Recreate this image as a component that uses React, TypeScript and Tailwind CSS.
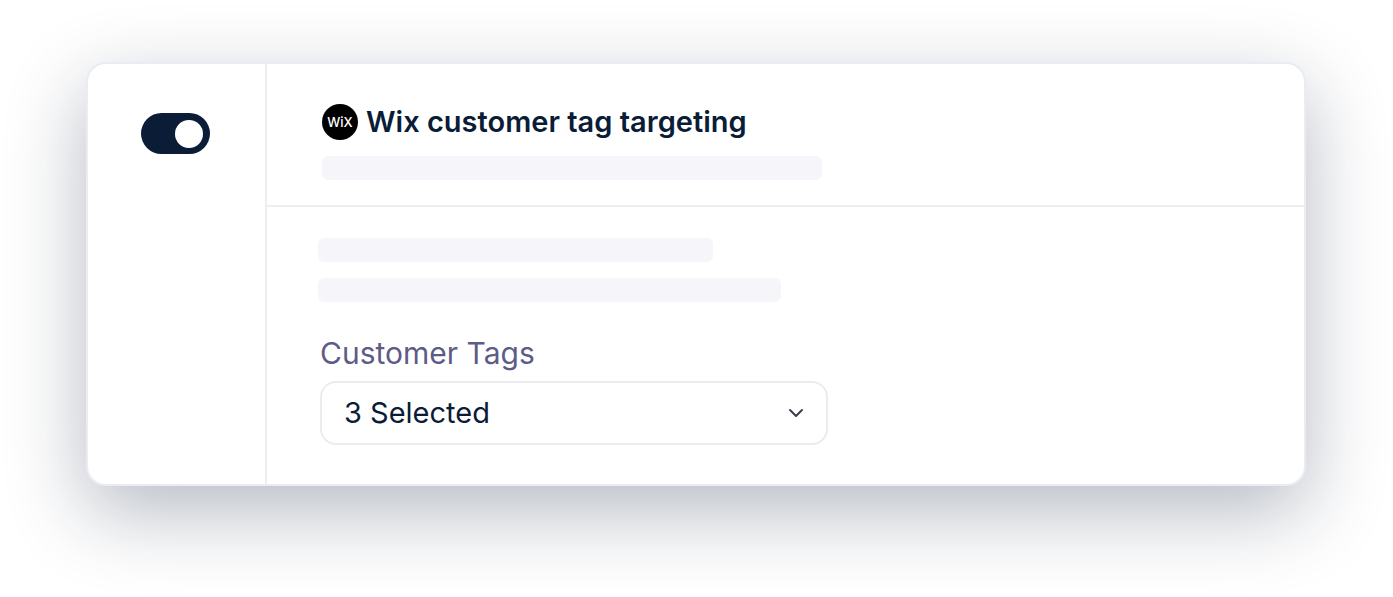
import React, { useState } from "react";

function Placeholder({ className }: { className: string }) {
  return <div className={"h-6 w-full rounded-md bg-[#f6f6fa] " + className} />;
}

function WixLogo() {
  return (
    <span className="flex h-9 w-9 shrink-0 items-center justify-center rounded-full bg-black text-[13px] leading-none font-medium text-white">
      WiX
    </span>
  );
}

export default function App() {
  const [enabled, setEnabled] = useState(true);

  return (
    <main className="bg-white pt-[62px] pr-[87px] pb-[111px] pl-[86px] font-['Inter',sans-serif] text-[#0b1c36]">
      <div className="flex rounded-[20px] border-2 border-[#ecebf5] bg-white shadow-[0_26px_80px_rgba(11,28,54,0.3)]">
        {/* toggle */}
        <div className="flex w-[179px] shrink-0 items-start border-r-2 border-[#eeeef0] pt-[49px] pl-[53px]">
          <input
            type="checkbox"
            role="switch"
            aria-label="Wix customer tag targeting"
            checked={enabled}
            onChange={(e) => setEnabled(e.target.checked)}
            className="flex h-[41px] w-[69px] cursor-pointer appearance-none items-center rounded-full bg-gray-300 px-[7px] before:h-7 before:w-7 before:rounded-full before:bg-white checked:justify-end checked:bg-[#0b1c36]"
          />
        </div>

        <div className="min-w-0 flex-1">
          {/* heading */}
          <div className="border-b-2 border-[#eeeef0] pt-[38px] pr-14 pb-[25px] pl-[55px]">
            <div className="mb-[14px] flex items-center gap-2">
              <WixLogo />
              <h1 className="text-[29px] leading-10 font-semibold">Wix customer tag targeting</h1>
            </div>
            <Placeholder className="max-w-[500px]" />
          </div>

          {/* settings */}
          <div className="pt-[31px] pr-14 pb-[39px] pl-[51px]">
            <Placeholder className="mb-4 max-w-[395px]" />
            <Placeholder className="max-w-[463px]" />
            <div className="mt-[31px] pl-[2px]">
              <label htmlFor="customer-tags" className="block text-[30px] leading-10 text-[#5d5b88]">
                Customer Tags
              </label>
              <div className="relative mt-2 max-w-[508px]">
                <select
                  id="customer-tags"
                  className="h-16 w-full appearance-none rounded-2xl border-2 border-[#ececee] bg-white pr-14 pl-[22px] text-[29px]"
                >
                  <option>3 Selected</option>
                </select>
                <svg
                  viewBox="0 0 16 10"
                  className="pointer-events-none absolute top-1/2 right-6 h-[10px] w-4 -translate-y-1/2 fill-none stroke-[#3d3f4a] stroke-2"
                  strokeLinecap="round"
                  strokeLinejoin="round"
                  aria-hidden="true"
                >
                  <path d="M2 2 L8 8 L14 2" />
                </svg>
              </div>
            </div>
          </div>
        </div>
      </div>
    </main>
  );
}
